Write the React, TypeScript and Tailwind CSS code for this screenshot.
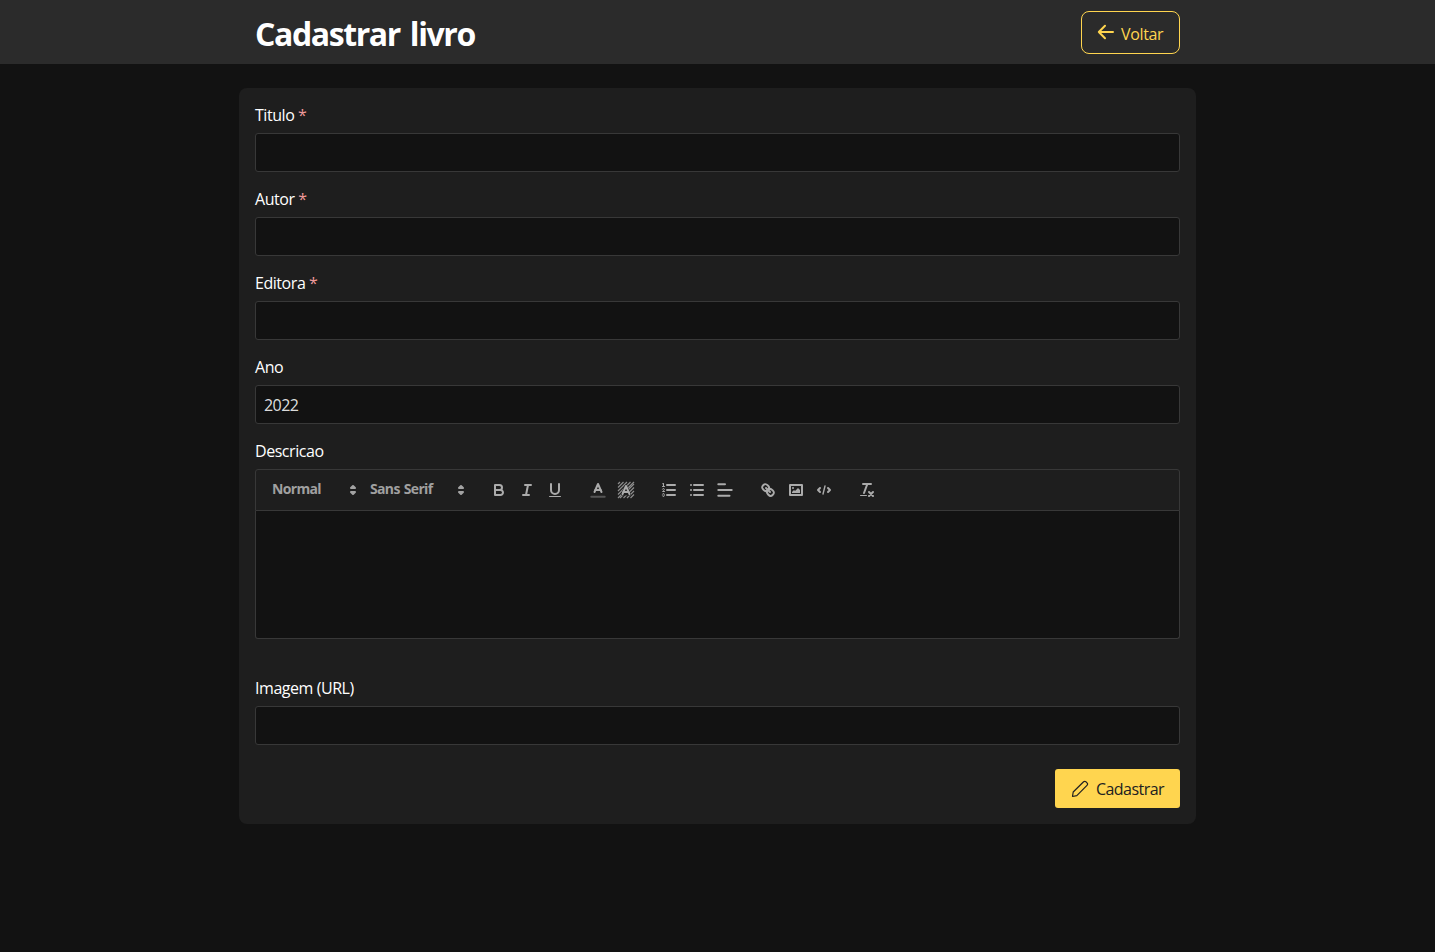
import type { ReactNode } from "react";

const fieldBox = "h-[39px] w-full rounded-[3px] border border-[#383838] bg-[#121212] px-2 outline-none";

function Label({ children, required }: { children: ReactNode; required?: boolean }) {
  return (
    <label className="mb-[7px] flex h-[22px] items-end whitespace-pre text-base leading-[21px] tracking-[-0.45px] text-white">
      {children}
      {required && <span className="text-[#ef9a9a]"> *</span>}
    </label>
  );
}

function Field({ label, required, value }: { label: string; required?: boolean; value?: string }) {
  return (
    <div>
      <Label required={required}>{label}</Label>
      <input className={`block text-base tracking-[-0.55px] text-white/87 ${fieldBox}`} defaultValue={value} aria-label={label} />
    </div>
  );
}

function Tool({ name, children }: { name: string; children: ReactNode }) {
  return (
    <button type="button" aria-label={name} className="flex h-6 w-7 items-center justify-center">
      <svg viewBox="0 0 18 18" className="size-[18px]" fill="none" stroke="#ababab" strokeWidth="2" strokeLinecap="round" strokeLinejoin="round">
        {children}
      </svg>
    </button>
  );
}

function Picker({ label, width }: { label: string; width: string }) {
  return (
    <button type="button" className={`flex h-6 items-center justify-between pl-2 text-sm font-bold text-[#a0a0a0] ${width}`}>
      <span className="pb-0.5 tracking-[-0.65px] [word-spacing:1px]">{label}</span>
      <svg viewBox="0 0 18 18" className="size-[18px]" fill="none" stroke="#a3a3a3" strokeWidth="2" strokeLinecap="round" strokeLinejoin="round">
        <polygon points="7 11 9 13 11 11 7 11" />
        <polygon points="7 7 9 5 11 7 7 7" />
      </svg>
    </button>
  );
}

function Group({ children }: { children: ReactNode }) {
  return <div className="mr-[15px] flex">{children}</div>;
}

const hatch = [3, 6.5, 10, 13.5, 17];

function Toolbar() {
  return (
    <div className="flex h-[42px] items-start rounded-t-[3px] border border-[#383838] bg-[#1e1e1e] p-2">
      <Group>
        <Picker label="Normal" width="w-[98px]" />
        <Picker label="Sans Serif" width="w-[108px]" />
      </Group>
      <Group>
        <Tool name="Bold">
          <path d="M5,4H9.5A2.5,2.5,0,0,1,12,6.5v0A2.5,2.5,0,0,1,9.5,9H5V4Z" />
          <path d="M5,9h5.5A2.5,2.5,0,0,1,13,11.5v0A2.5,2.5,0,0,1,10.5,14H5V9Z" />
        </Tool>
        <Tool name="Italic">
          <path d="M7 4H13M5 14H11M8 14L10 4" />
        </Tool>
        <Tool name="Underline">
          <path d="M5,3V9a4.012,4.012,0,0,0,4,4H9a4.012,4.012,0,0,0,4-4V3" />
          <rect x="3" y="15" width="12" height="1" rx="0.5" fill="#ababab" stroke="none" />
        </Tool>
      </Group>
      <Group>
        <Tool name="Text color">
          <path d="M2.3 15.7H15.7" stroke="#555555" />
          <polyline points="5.5 11 9 3 12.5 11" />
          <path d="M11.63 9H6.38" />
        </Tool>
        <Tool name="Background color">
          <g strokeWidth="1.2" strokeLinecap="butt" stroke="#8c8c8c">
            {hatch.map((n) => (
              <path key={n} d={`M1 ${n}L${n} 1M${n} 17L17 ${n}`} />
            ))}
          </g>
          <path d="M9 5L5.5 13H12.5Z" fill="#1e1e1e" stroke="#1e1e1e" strokeWidth="3" />
          <polyline points="5.5 13 9 5 12.5 13" />
          <path d="M11.63 11H6.38" />
        </Tool>
      </Group>
      <Group>
        <Tool name="Ordered list">
          <path d="M7 4H15M7 9H15M7 14H15" />
          <g strokeWidth="1">
            <path d="M2.5 5.5H4.5" />
            <path stroke="none" fill="#ababab" d="M3.5,6A0.5,0.5,0,0,1,3,5.5V3.085l-0.276.138A0.5,0.5,0,0,1,2.053,3c-0.124-.247-0.023-0.324.224-0.447l1-.5A0.5,0.5,0,0,1,4,2.5v3A0.5,0.5,0,0,1,3.5,6Z" />
            <path d="M4.5,10.5h-2c0-.234,1.85-1.076,1.85-2.234A0.959,0.959,0,0,0,2.5,8.156" />
            <path d="M2.5,14.846a0.959,0.959,0,0,0,1.85-.109A0.7,0.7,0,0,0,3.75,14a0.688,0.688,0,0,0,.6-0.736,0.959,0.959,0,0,0-1.85-.109" />
          </g>
        </Tool>
        <Tool name="Bullet list">
          <path d="M6 4H15M6 9H15M6 14H15M3 4H3M3 9H3M3 14H3" />
        </Tool>
        <Tool name="Align">
          <path d="M2.3 3.3H9M2.3 9H15.7M2.3 14.7H13.5" />
        </Tool>
      </Group>
      <Group>
        <Tool name="Link">
          <path d="M7 7L11 11" />
          <path d="M8.9,4.577a3.476,3.476,0,0,1,.36,4.679A3.476,3.476,0,0,1,4.577,8.9C3.185,7.5,2.035,6.4,4.217,4.217S7.5,3.185,8.9,4.577Z" />
          <path d="M13.423,9.1a3.476,3.476,0,0,0-4.679-.36,3.476,3.476,0,0,0,.36,4.679c1.392,1.392,2.5,2.542,4.679.36S14.815,10.5,13.423,9.1Z" />
        </Tool>
        <Tool name="Image">
          <rect x="3" y="4" width="12" height="10" />
          <circle cx="6" cy="7" r="1" fill="#ababab" stroke="none" />
          <polyline points="5 12 5 11 7 9 8 10 11 7 13 9 13 12 5 12" fill="#ababab" stroke="none" />
        </Tool>
        <Tool name="Code block">
          <polyline points="5 7 3 9 5 11" />
          <polyline points="13 7 15 9 13 11" />
          <path d="M10 5L8 13" strokeWidth="1.4" />
        </Tool>
      </Group>
      <Group>
        <Tool name="Clear formatting">
          <path d="M5 3H13M6 12L9.35 3M11 11L15 15M15 11L11 15" />
          <rect x="2" y="14" width="7" height="1" rx="0.5" fill="#ababab" stroke="none" />
        </Tool>
      </Group>
    </div>
  );
}

export default function App() {
  return (
    <div className="min-h-screen bg-[#121212] font-['Open_Sans','Noto_Sans',sans-serif]">
      <header className="h-16 bg-[#2b2b2b]">
        <div className="mx-auto flex h-full w-[925px] items-center justify-between">
          <h1 className="pt-[3px] text-[32px] font-bold leading-10 tracking-[-1.4px] text-white [word-spacing:3px]">Cadastrar livro</h1>
          <button type="button" className="mb-[-1px] flex h-[43px] w-[99px] items-center rounded-lg border border-[#ffd54f] pl-[15px] text-[#ffd54f]">
            <svg viewBox="0 0 18 18" className="mb-px size-[18px]" fill="none" stroke="currentColor" strokeWidth="2" strokeLinecap="round" strokeLinejoin="round">
              <path d="M16 9H1.8M8 2.8L1.8 9L8 15.2" />
            </svg>
            <span className="ml-1.5 pt-0.5 text-base tracking-[-0.35px]">Voltar</span>
          </button>
        </div>
      </header>
      <main className="mx-auto mt-6 w-[957px] rounded-lg bg-[#1e1e1e] p-4">
        <form className="flex flex-col gap-4">
          <Field label="Titulo" required />
          <Field label="Autor" required />
          <Field label="Editora" required />
          <Field label="Ano" value="2022" />
          <div className="mb-[22px]">
            <Label>Descricao</Label>
            <Toolbar />
            <div className="h-32 rounded-b-[3px] border border-t-0 border-[#383838] bg-[#121212]" />
          </div>
          <Field label="Imagem (URL)" />
          <button type="button" className="mt-2 flex h-[39px] w-[125px] items-center self-end rounded-[3px] bg-[#ffd54f] pl-4 text-[#212121]">
            <svg viewBox="0 0 18 18" className="size-[18px]" fill="none" stroke="currentColor" strokeWidth="1.2" strokeLinecap="round" strokeLinejoin="round">
              <path d="M1.5 16.5L2.2 12L12.6 1.8Q13.7.8 15 1.8L16 2.8Q17.2 4.1 16 5.3L5.8 15.6Z" />
            </svg>
            <span className="ml-[7px] pt-px text-base tracking-[-0.55px]">Cadastrar</span>
          </button>
        </form>
      </main>
    </div>
  );
}
